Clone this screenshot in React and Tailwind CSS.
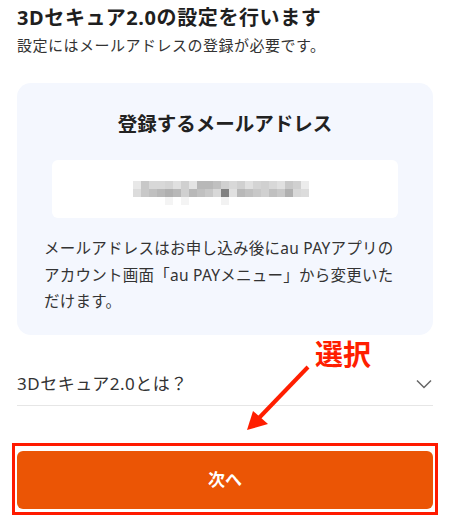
import React from "react";

const row1 = ["#e8e8e8", "#c8c8c8", "#d8d8d8", "#d8d8d8", "#d4d4d4", "#e0e0e0", "#d0d0d0", "#e4e4e4", "#b8b8b8", "#b8b8b8", "#c0c0c0", "#d0d0d0", "#d8d8d8", "#d0d0d0", "#e0e0e0", "#d4d4d4", "#d0d0d0", "#d8d8d8", "#e0e0e0", "#c8c8c8", "#d0d0d0", "#ececec", "#ffffff"];
const row2 = ["#dcdcdc", "#c8c8c8", "#c0c0c0", "#b8b8b8", "#b0b0b0", "#b8b8b8", "#d0d0d0", "#b8b8b8", "#c0c0c0", "#c8c8c8", "#d8d8d8", "#808080", "#e0e0e0", "#b8b8b8", "#c0c0c0", "#c8c8c8", "#d0d0d0", "#c0c0c0", "#c8c8c8", "#b0b0b0", "#d8d8d8", "#dcdcdc", "#ffffff"];
const row3 = ["#ffffff", "#ffffff", "#ffffff", "#ffffff", "#f4f4f4", "#ffffff", "#f4f4f4", "#ffffff", "#ffffff", "#ffffff", "#ffffff", "#f2f2f2", "#ffffff", "#ffffff", "#ffffff", "#ffffff", "#ffffff", "#ffffff", "#ffffff", "#ffffff", "#ffffff", "#ffffff", "#ffffff"];

const MosaicRow = ({ colors }) => (
  <div className="flex">
    {colors.map((c, i) => (
      <div key={i} className="w-[8px] h-[8px]" style={{ backgroundColor: c }} />
    ))}
  </div>
);

export default function App() {
  return (
    <div
      className="relative w-[450px] h-[532px] overflow-hidden bg-white px-[17px] text-[#222]"
      style={{ fontFamily: '"Noto Sans", "Noto Sans CJK JP", sans-serif' }}
    >
      {/* Header */}
      <h1 className="pt-[4px] text-[20px] leading-[28px] font-bold tracking-[0.6px] text-[#1f1f1f]">
        3Dセキュア2.0の設定を行います
      </h1>
      <p className="mt-[3px] text-[15px] leading-[20px] tracking-[0.5px] text-[#333]">
        設定にはメールアドレスの登録が必要です。
      </p>

      {/* Email card */}
      <div className="mt-[28px] rounded-[14px] bg-[#f4f7fe] pt-[27px] pb-[20px]">
        <h2 className="text-center text-[19.5px] leading-[28px] font-bold text-[#222]">
          登録するメールアドレス
        </h2>
        <div className="mx-[35px] mt-[22px] h-[58px] rounded-[6px] bg-white flex justify-center pt-[21px]">
          <div className="flex flex-col">
            <MosaicRow colors={row1} />
            <MosaicRow colors={row2} />
            <MosaicRow colors={row3} />
          </div>
        </div>
        <p className="mt-[17px] px-[27px] text-[15.5px] leading-[26.5px] tracking-[0.25px] text-[#333] whitespace-nowrap">
          メールアドレスはお申し込み後にau PAYアプリの
          <br />
          アカウント画面「au PAYメニュー」から変更いた
          <br />
          だけます。
        </p>
      </div>

      {/* Accordion */}
      <div className="mt-[37px] flex items-center justify-between pb-[9px] border-b border-[#e6e6e6]">
        <span className="text-[17px] leading-[24px] tracking-[0.5px] text-[#333]">3Dセキュア2.0とは？</span>
        <svg width="16" height="10" viewBox="0 0 16 10" className="mr-[1px]">
          <path d="M1 1.5 L8 8.5 L15 1.5" fill="none" stroke="#666" strokeWidth="1.5" />
        </svg>
      </div>

      {/* Next button with highlight */}
      <div className="-mx-[5px] mt-[37px] border-[3px] border-[#ff1a00] pt-[5px] pb-[3px] px-[2px]">
        <button className="w-full h-[58px] rounded-[6px] bg-[#eb5505] text-white text-[17px] font-bold">
          次へ
        </button>
      </div>

      {/* Annotation */}
      <span className="absolute left-[315px] top-[335px] text-[28px] leading-[38px] font-bold text-[#ff1e00]">
        選択
      </span>
      <svg className="absolute left-0 top-0" width="450" height="532" viewBox="0 0 450 532">
        <line x1="308" y1="367" x2="258" y2="419" stroke="#ff1e00" strokeWidth="4" />
        <polygon points="247,430 253,411 268,424" fill="#ff1e00" />
      </svg>
    </div>
  );
}
